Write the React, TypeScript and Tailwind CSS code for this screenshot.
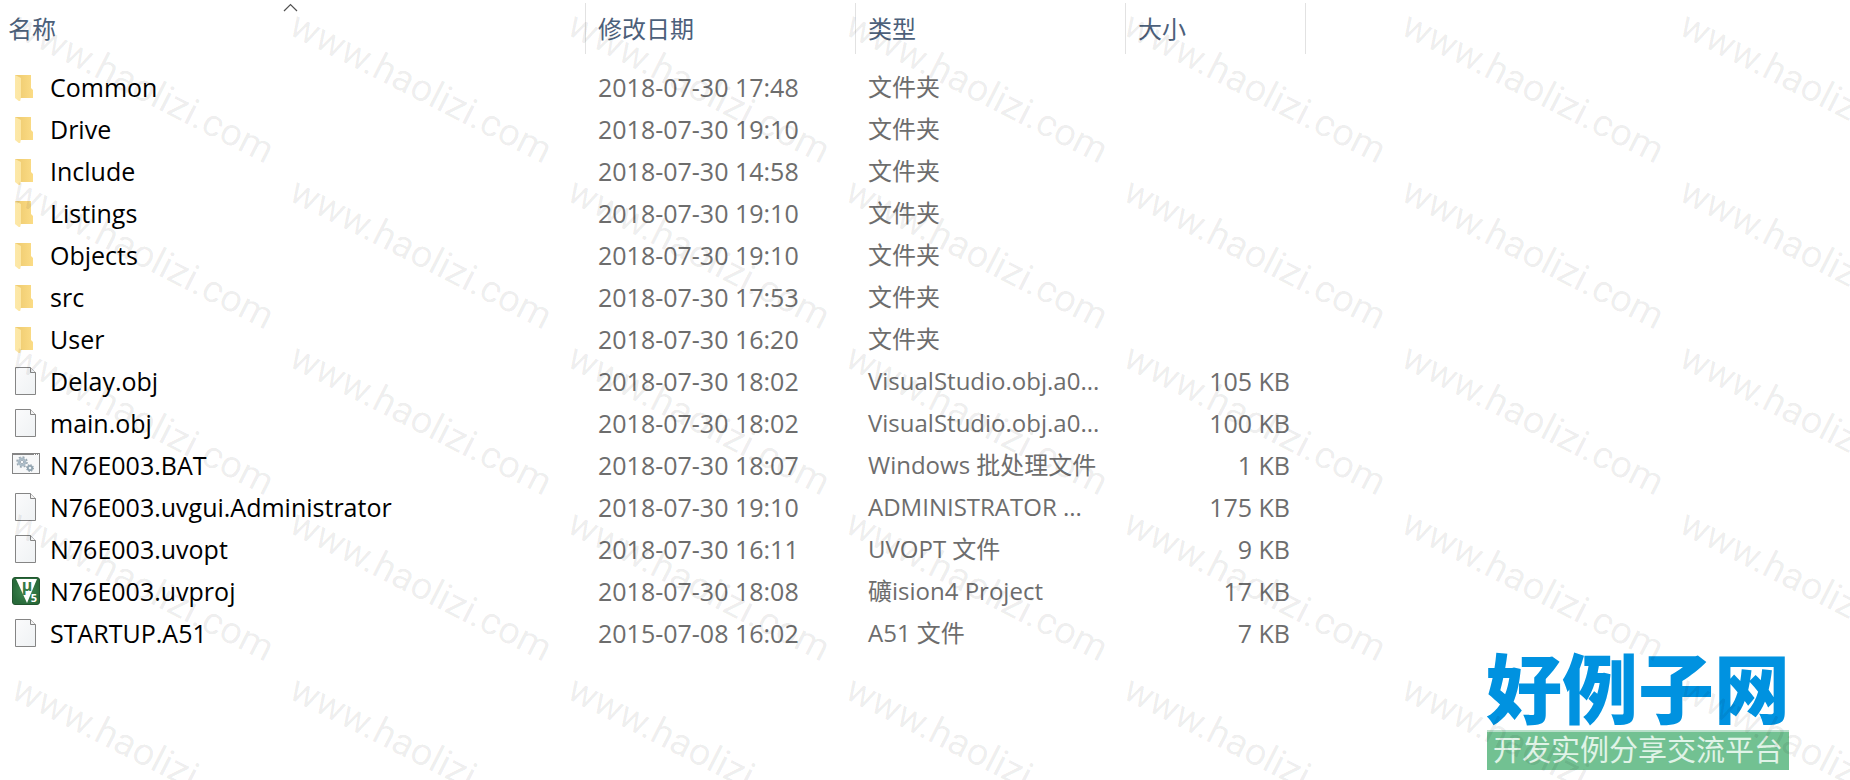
import React from "react";

type IconKind = "folder" | "file" | "batch" | "uvision";

interface Entry {
  name: string;
  icon: IconKind;
  date: string;
  type: string;
  size?: string;
}

const entries: Entry[] = [
  { name: "Common", icon: "folder", date: "2018-07-30 17:48", type: "文件夹" },
  { name: "Drive", icon: "folder", date: "2018-07-30 19:10", type: "文件夹" },
  { name: "Include", icon: "folder", date: "2018-07-30 14:58", type: "文件夹" },
  { name: "Listings", icon: "folder", date: "2018-07-30 19:10", type: "文件夹" },
  { name: "Objects", icon: "folder", date: "2018-07-30 19:10", type: "文件夹" },
  { name: "src", icon: "folder", date: "2018-07-30 17:53", type: "文件夹" },
  { name: "User", icon: "folder", date: "2018-07-30 16:20", type: "文件夹" },
  { name: "Delay.obj", icon: "file", date: "2018-07-30 18:02", type: "VisualStudio.obj.a0...", size: "105 KB" },
  { name: "main.obj", icon: "file", date: "2018-07-30 18:02", type: "VisualStudio.obj.a0...", size: "100 KB" },
  { name: "N76E003.BAT", icon: "batch", date: "2018-07-30 18:07", type: "Windows 批处理文件", size: "1 KB" },
  { name: "N76E003.uvgui.Administrator", icon: "file", date: "2018-07-30 19:10", type: "ADMINISTRATOR ...", size: "175 KB" },
  { name: "N76E003.uvopt", icon: "file", date: "2018-07-30 16:11", type: "UVOPT 文件", size: "9 KB" },
  { name: "N76E003.uvproj", icon: "uvision", date: "2018-07-30 18:08", type: "礦ision4 Project", size: "17 KB" },
  { name: "STARTUP.A51", icon: "file", date: "2015-07-08 16:02", type: "A51 文件", size: "7 KB" },
];

const columns = ["名称", "修改日期", "类型", "大小"];

const FolderIcon = () => (
  <svg width="28" height="28" viewBox="0 0 28 28" aria-hidden="true">
    <defs>
      <linearGradient id="folder-back" x1="0" y1="0" x2="1" y2="0">
        <stop offset="0.2" stopColor="#f0cd72" />
        <stop offset="1" stopColor="#fbdc86" />
      </linearGradient>
      <linearGradient id="folder-front" x1="0" y1="0" x2="1" y2="0">
        <stop offset="0" stopColor="#fde8a9" />
        <stop offset="1" stopColor="#fce6a2" />
      </linearGradient>
    </defs>
    <path d="M3 2h16v13l2 2v8H8L3 24z" fill="url(#folder-back)" />
    <path d="M3 2l6 3v19l-1 5-5-4z" fill="url(#folder-front)" />
  </svg>
);

const FileIcon = () => (
  <svg width="28" height="28" viewBox="0 0 28 28" aria-hidden="true">
    <defs>
      <linearGradient id="sheet" x1="0" y1="0" x2="1" y2="1">
        <stop offset="0" stopColor="#fbfbfc" />
        <stop offset="1" stopColor="#eff2f4" />
      </linearGradient>
    </defs>
    <path d="M3.5 .5h15l5 5v22h-20z" fill="url(#sheet)" stroke="#858585" />
    <path d="M18.5 .5v5h5" fill="#f4f4f4" stroke="#858585" />
  </svg>
);

const BatchIcon = () => (
  <svg width="28" height="28" viewBox="0 0 28 28" aria-hidden="true">
    <rect x="0.5" y="2.5" width="27" height="20" fill="#f7f8f9" stroke="#858585" />
    <path d="M0 3h28" stroke="#858585" strokeWidth="2" />
    <path d="M22 3.5h1M24 3.5h1M26 3.5h1" stroke="#fff" />
    <circle cx="10" cy="11" r="5" fill="none" stroke="#9aa7b1" strokeWidth="1.5" strokeDasharray="2 1.927" />
    <circle cx="10" cy="11" r="3.3" fill="#eef3f6" stroke="#a9bac6" strokeWidth="2.2" />
    <circle cx="10" cy="11" r="1.8" fill="#f7f8f9" stroke="#8796a2" strokeWidth="0.8" />
    <circle cx="18" cy="17" r="3.3" fill="none" stroke="#8f9ca6" strokeWidth="1.2" strokeDasharray="1.4 1.192" />
    <circle cx="18" cy="17" r="2.2" fill="#eef3f6" stroke="#91a4b1" strokeWidth="1.8" />
  </svg>
);

const UvisionIcon = () => (
  <svg width="28" height="28" viewBox="0 0 28 28" aria-hidden="true">
    <defs>
      <radialGradient id="uv-green">
        <stop offset="0" stopColor="#438c55" />
        <stop offset="1" stopColor="#286a3a" />
      </radialGradient>
    </defs>
    <rect x="0.5" y="0.5" width="27" height="27" rx="2.5" fill="url(#uv-green)" stroke="#22552f" />
    <path d="M4 2h21L15 26z" fill="#fff" />
    <text x="15" y="14" textAnchor="middle" fontSize="16" fontWeight="700" fill="#347a46" className="font-['Open_Sans',sans-serif]">
      µ
    </text>
    <text x="22" y="25" textAnchor="middle" fontSize="11" fontWeight="700" fill="#fff" className="font-['Open_Sans',sans-serif]">
      5
    </text>
  </svg>
);

const icons: Record<IconKind, React.FC> = {
  folder: FolderIcon,
  file: FileIcon,
  batch: BatchIcon,
  uvision: UvisionIcon,
};

const FileTable = () => (
  <table className="w-[1306px] table-fixed border-separate border-spacing-0 text-left">
    <colgroup>
      <col className="w-[586px]" />
      <col className="w-[270px]" />
      <col className="w-[270px]" />
      <col className="w-[180px]" />
    </colgroup>
    <thead>
      <tr>
        {columns.map((label, i) => (
          <th key={label} scope="col" className="p-0 pt-[3px] pb-3 font-normal">
            <button
              type="button"
              className={`relative flex h-[51px] w-full items-center border-r border-[#e2e2e2] text-2xl text-[#4c607a] ${i === 0 ? "pl-2" : "pl-3"}`}
            >
              {label}
              {/* Sort direction marker */}
              {i === 0 && (
                <svg className="absolute top-0 left-[283px]" width="15" height="9" viewBox="0 0 15 9" aria-hidden="true">
                  <path d="M1 8l6.5-6.5L14 8" fill="none" stroke="#505050" strokeWidth="1.2" />
                </svg>
              )}
            </button>
          </th>
        ))}
      </tr>
    </thead>
    <tbody>
      {entries.map((entry) => {
        const Icon = icons[entry.icon];
        return (
          <tr key={entry.name} className="h-[42px] text-[#6d6d6d]">
            <td className="p-0 pl-3 text-black">
              <div className="flex items-center gap-[10px]">
                <Icon />
                <span>{entry.name}</span>
              </div>
            </td>
            <td className="p-0 pl-3">{entry.date}</td>
            <td className="p-0 pl-3 text-2xl whitespace-nowrap">{entry.type}</td>
            <td className="p-0 pr-4 text-right">{entry.size}</td>
          </tr>
        );
      })}
    </tbody>
  </table>
);

const SiteLogo = () => (
  <div className="absolute right-[61px] bottom-[10px] w-[302px] text-center font-['Noto_Sans_CJK_SC',sans-serif] whitespace-nowrap">
    <div className="flex justify-center text-[76px] leading-[90px] font-black text-[#0092e0]">好例子网</div>
    <div className="flex h-10 justify-center border-t-2 border-[#b9dfca] bg-[#72c192] text-[29px] leading-8 text-[#e0f3e7]">
      开发实例分享交流平台
    </div>
  </div>
);

// Repeated diagonal site address over the whole page
const Watermark = () => (
  <div
    aria-hidden="true"
    className="pointer-events-none absolute inset-0 grid auto-rows-[166px] grid-cols-[repeat(7,278px)] overflow-hidden pt-1 pl-6 font-['Roboto',Arial,sans-serif] text-[38px] leading-10 text-black/7"
  >
    {Array.from({ length: 35 }, (_, i) => (
      <span key={i} className="h-10 origin-top-left rotate-[27deg] whitespace-nowrap">
        www.haolizi.com
      </span>
    ))}
  </div>
);

const App = () => {
  return (
    <main className="relative min-h-screen overflow-hidden bg-white font-['Open_Sans','Noto_Sans_CJK_SC',sans-serif] text-[25px] leading-8">
      <FileTable />
      <SiteLogo />
      <Watermark />
    </main>
  );
};

export default App;
